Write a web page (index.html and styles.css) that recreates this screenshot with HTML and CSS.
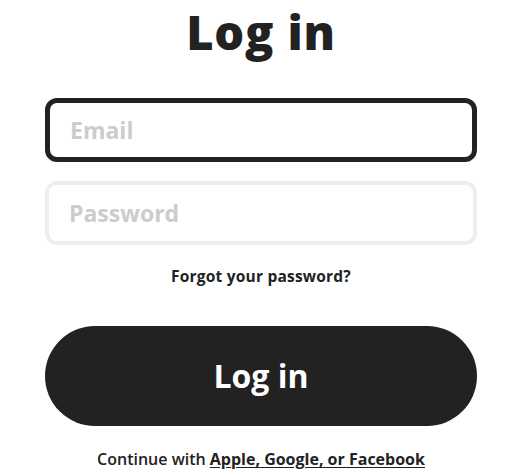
FILE: index.html
```html
<!DOCTYPE html>
<html lang="en">
<head>
<meta charset="utf-8">
<title>Log in</title>
<link rel="stylesheet" href="styles.css">
</head>
<body>
<main class="login">
  <h1 class="title">Log in</h1>
  <form class="form">
    <input class="field field-active" type="email" placeholder="Email">
    <input class="field" type="password" placeholder="Password">
    <a class="forgot" href="#">Forgot your password?</a>
    <button class="submit" type="button">Log in</button>
  </form>
  <p class="alt">Continue with <a href="#">Apple, Google, or Facebook</a></p>
</main>
</body>
</html>
```
FILE: styles.css
```css
* { box-sizing: border-box; }
html, body { margin: 0; padding: 0; background: #fff; }
body {
  font-family: "Open Sans", "Noto Sans", sans-serif;
  color: #222;
}
.login {
  width: 432px;
  margin-left: 45px;
  display: flex;
  flex-direction: column;
  align-items: stretch;
}
.title {
  margin: 0;
  height: 98px;
  text-align: center;
  font-size: 47px;
  font-weight: 800;
  line-height: 64px;
  letter-spacing: 0.8px;
}
.form {
  display: flex;
  flex-direction: column;
}
.field {
  height: 64px;
  border: 4px solid #eee;
  border-radius: 12px;
  padding: 0 20px;
  font-family: inherit;
  font-size: 23px;
  font-weight: 700;
  color: #222;
  outline: none;
  margin-bottom: 19px;
}
.field::placeholder { color: #ccc; }
.field-active { border: 5px solid #222; }
.forgot {
  align-self: center;
  margin-top: 0;
  font-size: 15.5px;
  font-weight: 700;
  color: #222;
  text-decoration: none;
  line-height: 24px;
  letter-spacing: 0.2px;
}
.submit {
  margin-top: 38px;
  height: 100px;
  border: none;
  border-radius: 50px;
  background: #222;
  color: #fff;
  font-family: inherit;
  font-size: 32px;
  font-weight: 700;
  line-height: 1;
  padding: 0 0 1px;
}
.alt {
  margin: 21px 0 0;
  text-align: center;
  font-size: 16px;
  font-weight: 600;
  line-height: 24px;
}
.alt a {
  color: #222;
  font-weight: 700;
  text-decoration: underline;
  text-underline-offset: 2px;
}
```
